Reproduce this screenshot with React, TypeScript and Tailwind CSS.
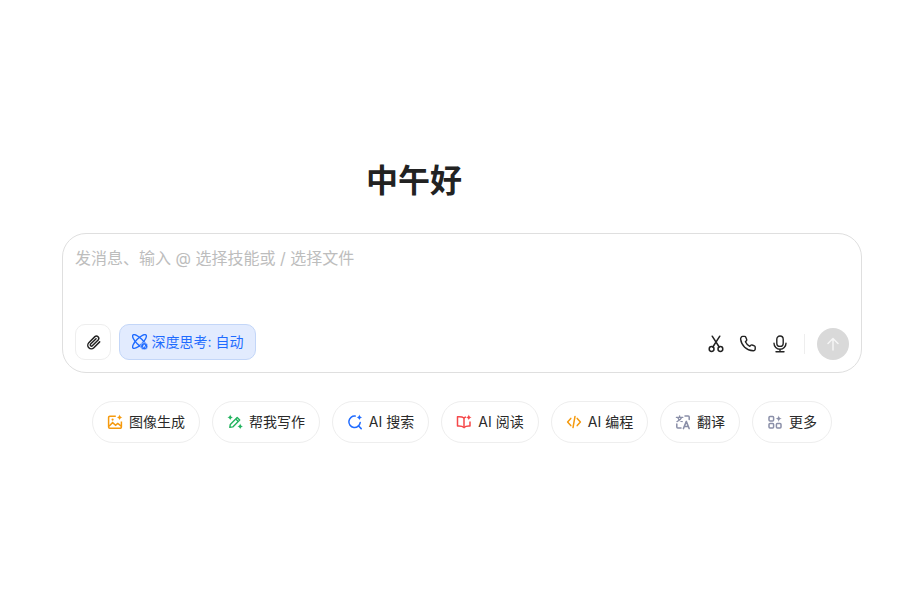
import React from "react";

const font = "font-['Inter','Noto_Sans_CJK_SC',sans-serif]";

function Spark({ x, y, c }: { x: number; y: number; c: string }) {
  return <path d={`M${x} ${y - 2.8}c.3 1.7 1.1 2.5 2.8 2.8c-1.7.3-2.5 1.100-2.8 2.800c-.3-1.700-1.100-2.500-2.800-2.800c1.700-.3 2.500-1.100 2.800-2.800z`} fill={c} />;
}

const Sv = ({ children, size = 16 }: { children: React.ReactNode; size?: number }) => (
  <svg width={size} height={size} viewBox="0 0 16 16" fill="none" className="shrink-0">{children}</svg>
);

const chips: { label: string; icon: React.ReactNode; w: string }[] = [
  {
    label: "图像生成", w: "w-[108px]",
    icon: (
      <Sv>
        <path d="M8.800 2.200H2.800a1.200 1.200 0 0 0-1.200 1.200v9.600a1.200 1.200 0 0 0 1.200 1.200h10.400a1.200 1.200 0 0 0 1.200-1.200V7.500" stroke="#f59a0e" strokeWidth="1.500" />
        <path d="M2 12.200l3.600-3.600 3 2.600 2.200-1.800 3.400 2.800" stroke="#f59a0e" strokeWidth="1.500" />
        <circle cx="5.600" cy="5.600" r="1.100" fill="#f59a0e" />
        <Spark x={12.600} y={3.400} c="#f59a0e" />
      </Sv>
    ),
  },
  {
    label: "帮我写作", w: "w-[108px]",
    icon: (
      <Sv>
        <path d="M2.800 13.400l.5-3 6.900-6.900 2.500 2.500-6.900 6.900-3 .5z" stroke="#22b35e" strokeWidth="1.400" strokeLinejoin="round" />
        <path d="M8.800 5l2.500 2.500" stroke="#22b35e" strokeWidth="1.400" />
        <Spark x={3.200} y={3.400} c="#22b35e" />
        <Spark x={13.200} y={12.400} c="#22b35e" />
      </Sv>
    ),
  },
  {
    label: "AI 搜索", w: "w-[97px]",
    icon: (
      <Sv>
        <path d="M8.200 2.100A5.700 5.700 0 1 0 13.200 8.600" stroke="#1f6bff" strokeWidth="1.500" strokeLinecap="round" />
        <path d="M11.400 11.800l2.800 2.800" stroke="#1f6bff" strokeWidth="1.500" strokeLinecap="round" />
        <Spark x={12.400} y={3.400} c="#1f6bff" />
      </Sv>
    ),
  },
  {
    label: "AI 阅读", w: "w-[98px]",
    icon: (
      <Sv>
        <path d="M10 2.900C9.200 3.100 8.600 3.400 8 4C6.500 2.800 4 2.600 1.500 2.800V12C4 11.800 6.500 12 8 13.600C9.500 12 11.500 11.800 14 12V7.500" stroke="#f5484a" strokeWidth="1.500" strokeLinejoin="round" />
        <path d="M8 4v9.600" stroke="#f5484a" strokeWidth="1.500" />
        <Spark x={12.800} y={3.400} c="#f5484a" />
      </Sv>
    ),
  },
  {
    label: "AI 编程", w: "w-[97px]",
    icon: (
      <Sv>
        <path d="M4.800 4.400L1.600 8l3.200 3.600M11.200 4.400L14.400 8l-3.200 3.600M9 2.400L7 13.600" stroke="#f59a0e" strokeWidth="1.500" strokeLinecap="round" strokeLinejoin="round" />
      </Sv>
    ),
  },
  {
    label: "翻译", w: "w-[80px]",
    icon: (
      <Sv>
        <path d="M1.400 3.400h6.400M4.600 1.800v1.600M6.600 3.600C6 5.200 4.600 6.800 2 7.600M2.800 3.800c.6 1.600 2 3 4.400 3.800" stroke="#8a8fa8" strokeWidth="1.300" strokeLinecap="round" />
        <path d="M10 2h3.200a1 1 0 0 1 1 1v2.400M1.800 10v3a1 1 0 0 0 1 1H6" stroke="#8a8fa8" strokeWidth="1.500" strokeLinecap="round" />
        <path d="M8.400 14.600l2.900-7.200 2.900 7.200M9.400 12.400h3.800" stroke="#8a8fa8" strokeWidth="1.500" strokeLinecap="round" strokeLinejoin="round" />
      </Sv>
    ),
  },
  {
    label: "更多", w: "w-[80px]",
    icon: (
      <Sv>
        <rect x="2" y="2.400" width="4.600" height="4.600" rx="1" stroke="#8a8fa8" strokeWidth="1.500" />
        <rect x="2" y="9.400" width="4.600" height="4.600" rx="1" stroke="#8a8fa8" strokeWidth="1.500" />
        <rect x="9.400" y="9.400" width="4.600" height="4.600" rx="1" stroke="#8a8fa8" strokeWidth="1.500" />
        <path d="M11.700 1.400c.4 2.100 1.200 2.900 3.100 3.200c-1.900.4-2.700 1.200-3.100 3.300c-.4-2.100-1.200-2.900-3.100-3.300c1.900-.3 2.700-1.100 3.100-3.200z" fill="#8a8fa8" />
      </Sv>
    ),
  },
];

export default function App() {
  return (
    <div className={`${font} w-[900px] h-[600px] bg-white overflow-hidden pt-[161px] pl-[62px]`}>
      <h1 className="pl-[304px] h-[40px] text-[32px] leading-[40px] font-bold text-[#222222] whitespace-nowrap">中午好</h1>
      <div className="mt-[32px] w-[800px] h-[140px] rounded-[24px] border border-[#dfdfdf] bg-white pl-3 pr-3 flex flex-col">
        <div className="pt-[12px] h-[90px] text-[16px] leading-[24px] text-[#bdbdbd]">发消息、输入 @ 选择技能或 / 选择文件</div>
        <div className="flex items-end justify-between h-9">
          <div className="flex items-center gap-2">
            <button className="w-9 h-9 rounded-[10px] border border-[#eeeeee] flex items-center justify-center">
              <svg width="17" height="17" viewBox="0 0 16 16" fill="none">
                <path d="M13.800 7.400l-5.500 5.500a3.300 3.300 0 0 1-4.700-4.700l5.700-5.700a2.200 2.200 0 0 1 3.100 3.100l-5.500 5.500a1.100 1.100 0 0 1-1.600-1.600l5.100-5.100" stroke="#222" strokeWidth="1.400" strokeLinecap="round" />
              </svg>
            </button>
            <button className="h-9 w-[137px] rounded-[10px] border border-[#c3d6f8] bg-[#e2ebfe] flex items-center justify-center gap-[4px] text-[14px] text-[#1f6bff]">
              <svg width="16" height="16" viewBox="0 0 16 16" fill="none" className="shrink-0">
                <ellipse cx="7.500" cy="7.500" rx="9.200" ry="3.200" transform="rotate(45 7.500 7.500)" stroke="#1f6bff" strokeWidth="1.400" />
                <ellipse cx="7.500" cy="7.500" rx="9.200" ry="3.200" transform="rotate(-45 7.500 7.500)" stroke="#1f6bff" strokeWidth="1.400" />
                <circle cx="12.200" cy="12.200" r="3.600" fill="#1f6bff" stroke="#e2ebfe" strokeWidth=".6" />
                <path d="M11 13.600l1.200-2.800 1.200 2.800" stroke="#fff" strokeWidth=".8" />
              </svg>
              <span className="mb-[2px]">深度思考: 自动</span>
            </button>
          </div>
          <div className="flex items-center">
            <svg width="18" height="18" viewBox="0 0 18 18" fill="none" className="mr-[14px]">
              <circle cx="4.600" cy="14" r="2.400" stroke="#222" strokeWidth="1.500" />
              <circle cx="13.400" cy="14" r="2.400" stroke="#222" strokeWidth="1.500" />
              <path d="M5.800 12L12.800 1.200M12.200 12L5.200 1.200" stroke="#222" strokeWidth="1.500" strokeLinecap="round" />
            </svg>
            <svg width="18" height="18" viewBox="0 0 18 18" fill="none" className="mr-[14px]">
              <path d="M5.600 1.400c.6 0 1 .3 1.200.8l.9 2.200c.2.5 0 1-.3 1.400l-1 1c.8 1.900 2.400 3.500 4.400 4.500l1-1c.4-.4 1-.5 1.400-.3l2.200.9c.5.2.8.7.8 1.200v1.800c0 1.100-.9 2-2 1.900C7.400 15.400 2.400 10.400 1.600 4.200c-.1-1.200.8-2.800 2-2.800h2z" stroke="#222" strokeWidth="1.400" strokeLinejoin="round" />
            </svg>
            <svg width="18" height="18" viewBox="0 0 18 18" fill="none">
              <rect x="5.800" y="1" width="6.400" height="10.400" rx="3.200" stroke="#222" strokeWidth="1.400" />
              <path d="M3 8.200a6 6 0 0 0 12 0M9 14.200v2.600M5 16.800h8" stroke="#222" strokeWidth="1.400" strokeLinecap="round" />
            </svg>
            <div className="ml-[15px] mr-3 w-px h-5 bg-[#eeeeee]" />
            <div className="w-8 h-8 rounded-full bg-[#d9d9d9] flex items-center justify-center">
              <svg width="16" height="16" viewBox="0 0 16 16" fill="none">
                <path d="M8 14V2.500M3 7.500l5-5 5 5" stroke="#ffffff" strokeOpacity="0.75" strokeWidth="1.500" strokeLinecap="round" strokeLinejoin="round" />
              </svg>
            </div>
          </div>
        </div>
      </div>
      <div className="mt-[28px] ml-[30px] flex gap-3">
        {chips.map((c) => (
          <div key={c.label} className={`${c.w} h-[42px] rounded-full border border-[#eeeeee] flex items-center justify-center gap-[6px] text-[14px] text-[#2a2a2a] whitespace-nowrap`}>
            {c.icon}
            <span className="mb-[2px]">{c.label}</span>
          </div>
        ))}
      </div>
    </div>
  );
}
